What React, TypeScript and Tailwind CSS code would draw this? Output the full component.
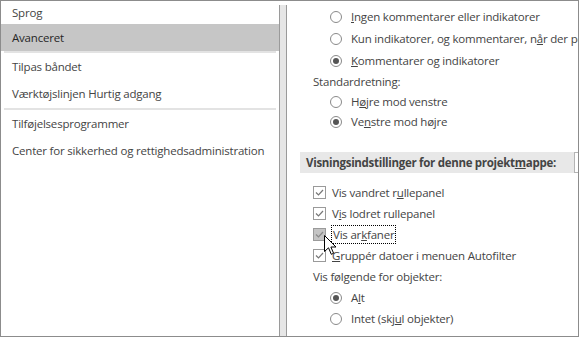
import React from "react";

const font = "font-['Open_Sans','Noto_Sans',sans-serif]";

function Radio({ checked }: { checked?: boolean }) {
  return (
    <span className="flex h-[12px] w-[12px] shrink-0 items-center justify-center rounded-full border border-[#8a8a8a] bg-white">
      {checked && <span className="h-[6px] w-[6px] rounded-full bg-[#555]" />}
    </span>
  );
}

function Check({ pressed }: { pressed?: boolean }) {
  return (
    <span
      className={`flex h-[13px] w-[13px] shrink-0 items-center justify-center border ${
        pressed ? "border-[#9a9a9a] bg-[#c4c4c4]" : "border-[#9a9a9a] bg-white"
      }`}
    >
      <svg width="11" height="11" viewBox="0 0 11 11">
        <path
          d="M2 5.5 L4.5 8 L9 3"
          fill="none"
          stroke={pressed ? "#8a8a8a" : "#777"}
          strokeWidth="1.2"
        />
      </svg>
    </span>
  );
}

function RadioRow({ checked, h, children }: { checked?: boolean; h: string; children: React.ReactNode }) {
  return (
    <div className={`flex items-center pl-[43px] ${h}`}>
      <Radio checked={checked} />
      <span className="ml-[9px] whitespace-nowrap">{children}</span>
    </div>
  );
}

function CheckRow({ pressed, children }: { pressed?: boolean; children: React.ReactNode }) {
  return (
    <div className="flex h-[21px] items-center pl-[26px]">
      <Check pressed={pressed} />
      <span className="ml-[6px] whitespace-nowrap">{children}</span>
    </div>
  );
}

const sep = <div className="mx-[3px] h-[2px] bg-[#e3e3e3]" />;

export default function App() {
  return (
    <div
      className={`flex h-[337px] w-[579px] overflow-hidden border border-[#8c8c8c] bg-white text-[11.5px] tracking-[-0.2px] text-[#444] ${font}`}
    >
      {/* left nav */}
      <div className="flex w-[278px] shrink-0 flex-col">
        <div className="flex h-[23px] items-center pl-[11px]">Sprog</div>
        <div className="flex h-[27px] items-center bg-[#c6c6c6] pl-[11px] text-[#262626]">Avanceret</div>
        {sep}
        <div className="flex h-[27px] items-center pl-[11px]">Tilpas båndet</div>
        <div className="flex h-[28px] items-center pl-[11px]">Værktøjslinjen Hurtig adgang</div>
        {sep}
        <div className="flex h-[27px] items-center pl-[11px]">Tilføjelsesprogrammer</div>
        <div className="flex h-[27px] items-center pl-[11px] whitespace-nowrap">
          Center for sikkerhed og rettighedsadministration
        </div>
      </div>

      {/* scroll strip */}
      <div className="mt-[4px] w-[8px] shrink-0 border-x border-[#9a9a9a] bg-[#e6e6e6]" />

      {/* right pane */}
      <div className="relative flex w-[291px] shrink-0 flex-col overflow-hidden pt-[4px]">
        <RadioRow h="h-[23px]">
          <u>I</u>ngen kommentarer eller indikatorer
        </RadioRow>
        <RadioRow h="h-[22px]">
          Kun indikatorer, og kommentarer, n<u>å</u>r der pegs på celler
        </RadioRow>
        <RadioRow checked h="h-[22px]">
          <u>K</u>ommentarer og indikatorer
        </RadioRow>
        <div className="flex h-[20px] items-center pl-[26px]">Standardretning:</div>
        <RadioRow h="h-[19px]">
          H<u>ø</u>jre mod venstre
        </RadioRow>
        <RadioRow checked h="h-[21px]">
          Ve<u>n</u>stre mod højre
        </RadioRow>

        <div className="mt-[20px] flex h-[21px] shrink-0">
          <div className="ml-[13px] flex w-[274px] shrink-0 items-center bg-[#e8e8e8] pl-[6px] font-bold tracking-[-0.3px] whitespace-nowrap">
            Visningsindstillinger for denne projekt<u>m</u>appe:
          </div>
          <div className="w-[40px] shrink-0 border border-[#b4b4b4] bg-white" />
        </div>

        <div className="mt-[9px]">
          <CheckRow>
            Vis vandret r<u>u</u>llepanel
          </CheckRow>
          <CheckRow>
            V<u>i</u>s lodret rullepanel
          </CheckRow>
          <CheckRow pressed>
            <span className="-ml-[1px] border border-dotted border-black px-[1px] py-[1px]">
              Vis ar<u>k</u>faner
            </span>
          </CheckRow>
          <CheckRow>
            <u>G</u>ruppér datoer i menuen Autofilter
          </CheckRow>
          <div className="flex h-[21px] items-center pl-[26px]">Vis følgende for objekter:</div>
          <RadioRow checked h="h-[21px]">
            A<u>l</u>t
          </RadioRow>
          <RadioRow h="h-[21px]">
            Intet (skj<u>u</u>l objekter)
          </RadioRow>
        </div>

        {/* mouse cursor */}
        <svg
          className="absolute left-[37px] top-[234px]"
          width="13"
          height="21"
          viewBox="0 0 13 21"
        >
          <path
            d="M0.5 0.5 L0.5 16.5 L4.5 12.8 L7.3 19.3 L9.6 18.3 L6.9 12 L12 12 Z"
            fill="#fff"
            stroke="#000"
            strokeWidth="1"
            strokeLinejoin="miter"
          />
        </svg>
      </div>
    </div>
  );
}
